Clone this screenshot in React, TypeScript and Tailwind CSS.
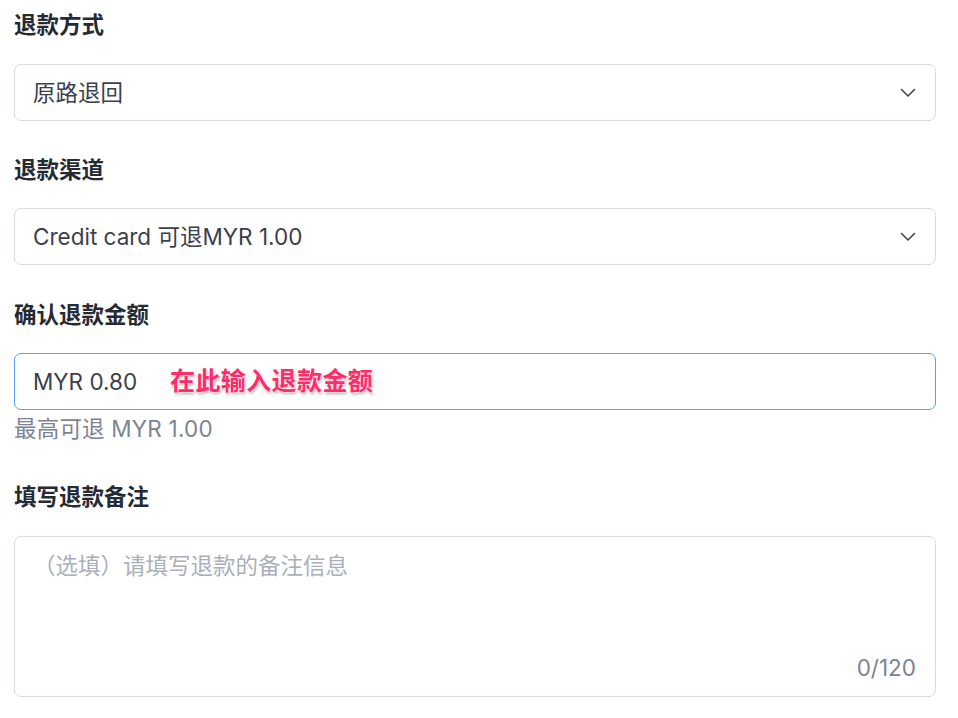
const font = "font-['Inter','Noto_Sans_CJK_SC',sans-serif]"

function Chevron() {
  return (
    <svg width="16" height="10" viewBox="0 0 16 10" fill="none" className="shrink-0">
      <polyline points="1.5,1.5 8,8 14.5,1.5" stroke="#3f4654" strokeWidth="1.6" strokeLinecap="round" strokeLinejoin="round" />
    </svg>
  )
}

function Label({ children, className = "" }: { children: React.ReactNode; className?: string }) {
  return (
    <div className={`text-[22.5px] leading-[30px] font-semibold text-[#262a33] ${className}`}>
      {children}
    </div>
  )
}

function Select({ value }: { value: string }) {
  return (
    <div className="flex h-[57px] items-center justify-between rounded-[7px] border border-[#d6dbe6] bg-white pl-[18px] pr-[19px]">
      <span className="text-[22.5px] text-[#3a404c]">{value}</span>
      <Chevron />
    </div>
  )
}

export default function App() {
  return (
    <div className={`min-h-[718px] w-[958px] bg-white pl-[14px] pr-[22px] pt-[10px] ${font}`}>

      {/* 退款方式 */}
      <Label>退款方式</Label>
      <div className="mt-[24px]">
        <Select value="原路退回" />
      </div>

      {/* 退款渠道 */}
      <Label className="mt-[34px]">退款渠道</Label>
      <div className="mt-[23px]">
        <Select value="Credit card 可退MYR 1.00" />
      </div>

      {/* 金额 */}
      <Label className="mt-[35px]">确认退款金额</Label>
      <div className="relative mt-[23px] flex h-[57px] items-center rounded-[7px] border border-[#5b9cf5] bg-white pl-[18px]">
        <span className="text-[22.5px] text-[#3a404c]">MYR 0.80</span>
        <span
          className="absolute left-[155px] top-[10px] text-[25px] leading-[34px] font-bold tracking-[0.4px] text-[#ff2b6b] [text-shadow:0_0_2px_#fff,0_0_2px_#fff,1px_2px_3px_rgba(0,0,0,0.35)]"
        >
          在此输入退款金额
        </span>
      </div>
      <div className="mt-[5px] text-[22.5px] leading-[28px] tracking-[0.2px] text-[#7c8494]">最高可退 MYR 1.00</div>

      {/* 备注 */}
      <Label className="mt-[39px]">填写退款备注</Label>
      <div className="mt-[24px] flex h-[161px] flex-col justify-between rounded-[7px] border border-[#d6dbe6] bg-white pb-[13px] pl-[18px] pr-[19px] pt-[14px]">
        <span className="text-[22.5px] leading-[30px] text-[#a9afbb]">（选填）请填写退款的备注信息</span>
        <span className="self-end text-[22.5px] leading-[30px] text-[#7c8494]">0/120</span>
      </div>
    </div>
  )
}
